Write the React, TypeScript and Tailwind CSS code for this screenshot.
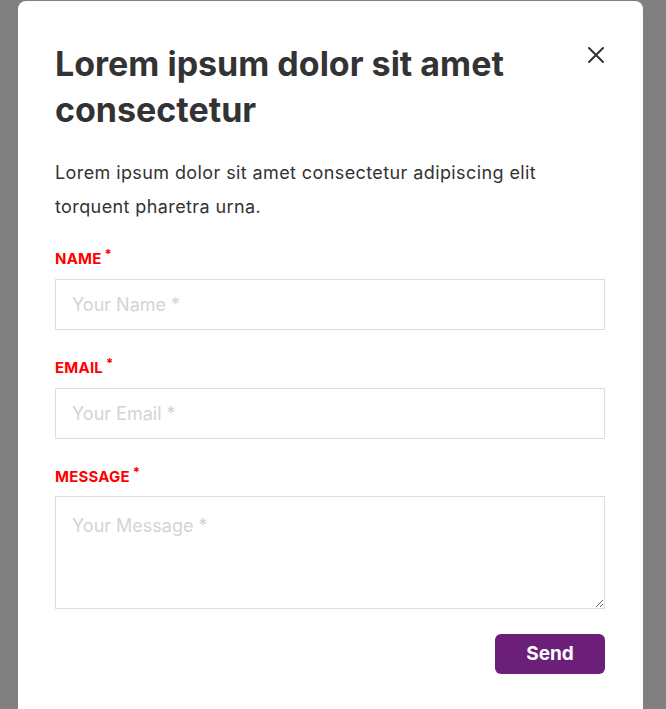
import React from "react";

const font = { fontFamily: "Inter, 'Noto Sans', sans-serif" };

function Field({ label, placeholder, multiline }: { label: string; placeholder: string; multiline?: boolean }) {
  return (
    <div className="flex flex-col">
      <label className={`text-[15px] font-bold text-[#ff0000] leading-[20px] flex items-start tracking-[0.2px] ${multiline ? "mb-[9px]" : "mb-[10px]"}`}>
        {label}
        <span className="text-[13px] leading-[12px] ml-[3px] -mt-[1px]">*</span>
      </label>
      {multiline ? (
        <textarea
          placeholder={placeholder}
          className="w-full h-[113px] border border-[#dddddd] px-[16px] pt-[15px] pb-[16px] text-[18px] text-[#333] placeholder:text-[#d4d4d4] outline-none resize-y block"
          style={font}
        />
      ) : (
        <input
          placeholder={placeholder}
          className="w-full h-[51px] border border-[#dddddd] px-[16px] text-[18px] text-[#333] placeholder:text-[#d4d4d4] outline-none block"
          style={font}
        />
      )}
    </div>
  );
}

export default function App() {
  return (
    <div className="w-[666px] h-[709px] bg-[#808080] overflow-hidden pt-[1px] pl-[18px]" style={font}>
      <div className="w-[625px] h-[740px] bg-white rounded-[8px] pl-[37px] pr-[38px] pt-[40px]">
        <div className="flex justify-between items-start">
          <h2 className="text-[34px] font-bold leading-[46px] text-[#333333] w-[480px]">
            Lorem ipsum dolor sit amet consectetur
          </h2>
          <button className="mt-[5px] w-[18px] h-[18px] text-[#333]">
            <svg viewBox="0 0 18 18" width="18" height="18" fill="none" stroke="currentColor" strokeWidth="2" strokeLinecap="round">
              <path d="M2 2 L16 16 M16 2 L2 16" />
            </svg>
          </button>
        </div>
        <p className="mt-[23px] text-[18px] leading-[34px] text-[#333333] tracking-[0.4px]">
          Lorem ipsum dolor sit amet consectetur adipiscing elit torquent pharetra urna.
        </p>
        <div className="mt-[25px] flex flex-col gap-[28px]">
          <Field label="NAME" placeholder="Your Name *" />
          <Field label="EMAIL" placeholder="Your Email *" />
          <Field label="MESSAGE" placeholder="Your Message *" multiline />
        </div>
        <div className="flex justify-end mt-[25px]">
          <button className="w-[110px] h-[40px] rounded-[6px] bg-[#6c1f78] text-white text-[19px] font-bold">
            Send
          </button>
        </div>
      </div>
    </div>
  );
}
